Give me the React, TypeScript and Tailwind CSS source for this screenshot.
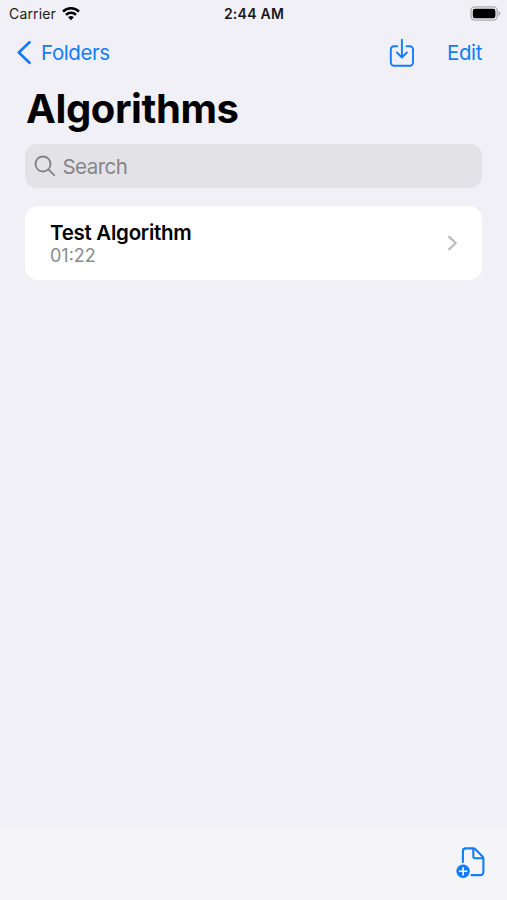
import type { ReactNode } from 'react';

const algorithms = [{ name: 'Test Algorithm', duration: '01:22' }];

function WifiIcon() {
  return (
    <svg width="18" height="14" viewBox="0 0 18 14" fill="none" stroke="black" strokeWidth="2.5">
      <path d="M1 4.6a11.4 11.4 0 0 1 16 0" />
      <path d="M4 7.9a7.1 7.1 0 0 1 10 0" />
      <path d="M9 13.3 6.1 10.3a4.2 4.2 0 0 1 5.8 0Z" fill="black" stroke="none" />
    </svg>
  );
}

function BatteryIcon() {
  return (
    <svg width="31" height="15" viewBox="0 0 31 15" fill="none">
      <rect x="1" y="0.9" width="26.2" height="13.2" rx="3.8" stroke="#aaaaac" strokeWidth="1.3" />
      <rect x="2.8" y="2.7" width="22.6" height="9.6" rx="2.2" fill="black" />
      <path d="M28.5 5.2c1.3.4 1.9 1.3 1.9 2.3s-.6 1.9-1.9 2.3Z" fill="#aaaaac" />
    </svg>
  );
}

function ImportIcon() {
  return (
    <svg width="26" height="30" viewBox="0 0 26 30" fill="none" stroke="#127cfb" strokeWidth="1.9" strokeLinecap="round" strokeLinejoin="round">
      <path d="M8.2 8.2H5a3.2 3.2 0 0 0-3.2 3.2v13.2A3.2 3.2 0 0 0 5 27.8h15.8a3.2 3.2 0 0 0 3.2-3.2V11.4a3.2 3.2 0 0 0-3.2-3.2h-3.2" />
      <path d="M12.9 1.8v17.6M7.9 14.5l5 5 5-5" />
    </svg>
  );
}

function NewDocumentIcon() {
  return (
    <svg width="30" height="32" viewBox="0 0 30 32" fill="none">
      <path
        d="M6.9 16V5.4a3 3 0 0 1 3-3h7.4a3 3 0 0 1 2.1.9l7.1 7.1a3 3 0 0 1 .9 2.1v13.6a3 3 0 0 1-3 3H15.4M17.3 2.8v7.4a2 2 0 0 0 2 2h7.6"
        stroke="#127cfb"
        strokeWidth="2.1"
        strokeLinecap="round"
        strokeLinejoin="round"
      />
      <circle cx="7.1" cy="25.3" r="6.7" fill="#127cfb" />
      <path d="M7.1 21.7v7.2M3.5 25.3h7.2" stroke="white" strokeWidth="1.6" strokeLinecap="round" />
    </svg>
  );
}

function NavButton({ children, label }: { children: ReactNode; label?: string }) {
  return (
    <button aria-label={label} className="flex cursor-pointer items-center text-[20.5px] tracking-[-0.4px] text-[#127cfb]">
      {children}
    </button>
  );
}

function StatusBar() {
  return (
    <div className="grid h-[27px] grid-cols-[1fr_auto_1fr] items-center pr-[6px] pl-[7px]">
      <div className="flex items-center gap-1.5 pl-0.5 text-[14px] tracking-[0.15px] text-[#202023]">
        Carrier
        <WifiIcon />
      </div>
      <div className="text-[14px] font-semibold tracking-[0.25px] text-[#18181a]">2:44 AM</div>
      <div className="flex justify-end">
        <BatteryIcon />
      </div>
    </div>
  );
}

export default function App() {
  return (
    <div className="flex h-screen flex-col bg-[#f1f0f6] font-['Inter',sans-serif] text-black">
      <StatusBar />

      <nav className="flex h-[52px] items-center justify-between pr-[25px] pl-[17px]">
        <NavButton>
          <svg width="15" height="24" viewBox="0 0 15 24" fill="none" className="mr-[9px]">
            <path d="M12.5 1.2 1.8 11.5l10.7 10.3" stroke="#127cfb" strokeWidth="2.7" strokeLinecap="round" strokeLinejoin="round" />
          </svg>
          Folders
        </NavButton>
        <div className="flex items-center gap-8">
          <NavButton label="Import">
            <ImportIcon />
          </NavButton>
          <NavButton>Edit</NavButton>
        </div>
      </nav>

      <main className="flex-1 px-[25px]">
        <h1 className="h-[65px] pl-px text-[40px] leading-[60px] font-bold tracking-[-0.4px]">Algorithms</h1>

        {/* Search field */}
        <div className="flex h-11 items-center gap-[6.5px] rounded-[12px] bg-[#e3e2e7] pl-[9px] text-[20.5px] tracking-[-0.55px] text-[#858589]">
          <svg width="22" height="22" viewBox="0 0 22 22" fill="none" stroke="#858589" strokeWidth="1.9" strokeLinecap="round">
            <circle cx="9" cy="9" r="7.5" />
            <path d="m14.6 14.6 5.6 5.6" />
          </svg>
          <span className="pt-0.5">Search</span>
        </div>

        <ul className="mt-[18px] overflow-hidden rounded-[13px] bg-white">
          {algorithms.map((algorithm) => (
            <li key={algorithm.name} className="flex h-[74px] items-center justify-between pr-6 pl-[25px]">
              <div>
                <div className="text-[20.5px] leading-[25px] font-semibold tracking-[-0.27px]">{algorithm.name}</div>
                <div className="text-[18px] leading-[22px] text-[#8b8b8e]">{algorithm.duration}</div>
              </div>
              <svg width="11" height="16" viewBox="0 0 11 16" fill="none">
                <path d="m2.2 1.8 6.5 6.2-6.5 6.2" stroke="#bdbdc0" strokeWidth="2.4" strokeLinecap="round" strokeLinejoin="round" />
              </svg>
            </li>
          ))}
        </ul>
      </main>

      <footer className="flex h-[73px] items-center justify-end bg-[#f5f5f8] pr-[21px] pb-[3px]">
        <button aria-label="New algorithm" className="cursor-pointer">
          <NewDocumentIcon />
        </button>
      </footer>
    </div>
  );
}
